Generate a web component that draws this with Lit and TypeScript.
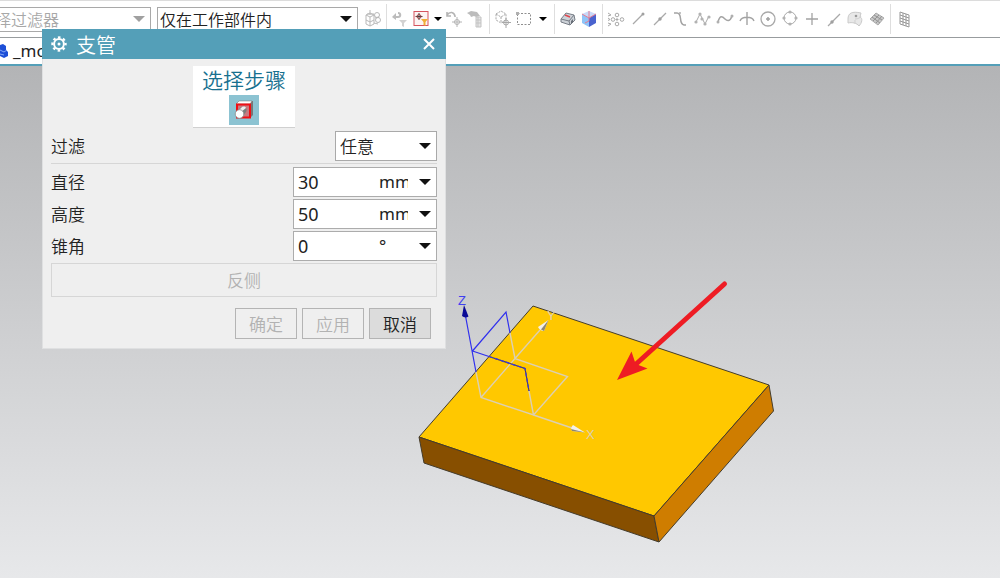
import { LitElement, html, css, svg } from "lit";
import { customElement, property } from "lit/decorators.js";

const glyphs: Record<string, unknown> = {
  assembly: svg`<g fill="none" stroke="#b9b9b9"><path d="M3 6l4-2 4 2v9l-4 2-4-2zM3 6l4 2 4-2M7 8v9M3 11l4 2 4-2M7 1v5M4 5h7"/><circle cx="14" cy="6" r="2.500"/><circle cx="15" cy="11" r="2.500"/><path d="M12 9l4-1M11 14l4 1"/></g>`,
  resetFilter: svg`<path d="M4 8h4c3 0 3-4 0-4" fill="none" stroke="#bcbcbc" stroke-width="2"/><path d="M2 8l4-4v7z" fill="#bcbcbc"/><path d="M9 11h8l-3 3v4l-2-1v-3z" fill="#d2d2d2"/>`,
  snapFilter: svg`<rect x="3" y="2.500" width="14" height="14" fill="#fdf3f3" stroke="#d6545f"/><path d="M8 4v7M4.500 7.500h7" stroke="#4a4040"/><circle cx="8" cy="7.500" r="2" fill="none" stroke="#a04848"/><path d="M10 10h7l-2.500 3v4l-2-1v-3z" fill="#f0ae35"/>`,
  undo: svg`<g fill="none" stroke="#b4b4b4"><path d="M2 3v4h4M2 6c3-4 7-3 8 1v1" stroke-width="1.600"/><path d="M12 8v10M7 13h10"/><circle cx="12" cy="13" r="2.500"/></g>`,
  handList: svg`<path d="M1 4l4-2 6 1 3 4-4 1-2-1-3 1-1-2z" fill="#bcbcbc"/><path d="M10 8h5v10h-5zM10 11h5M10 14h5M12 8v10" fill="#e6e6e6" stroke="#c3c3c3"/>`,
  pickBody: svg`<g fill="none" stroke="#a8a8a8"><path d="M3 5l5-3 5 3v6l-5 3-5-3zM3 5l5 3 5-3M8 8v6" stroke-dasharray="2 1"/><path d="M13 9v10M9 13.500h9"/><circle cx="13" cy="13.500" r="2.500"/></g>`,
  marquee: svg`<rect x="3.500" y="4.500" width="13" height="11" fill="none" stroke="#8f8f8f" stroke-dasharray="2 1.500"/><path d="M2 3h3v3h-3z" fill="#b0b0b0"/>`,
  shade: svg`<path d="M3 10l5-6 8 2 1 5-5 5-9-3z" fill="#cdd2d8" stroke="#777d86"/><path d="M3 10l8 2 5-6M11 12l1 4" fill="none" stroke="#777d86"/><path d="M7 6l5 2" stroke="#e0454c" stroke-width="1.500"/><path d="M13 12l2-2v3l-2 2z" fill="#696f78"/>`,
  cube: svg`<path d="M3 5l7-3 7 3-7 4z" fill="#c9d9f8"/><path d="M3 5l7 4v9l-7-4z" fill="#8fc4f8"/><path d="M17 5l-7 4v9l7-4z" fill="#4a63cf"/><path d="M10 2v10M3 5l7 4 7-4M10 12l-4 2" stroke="#e27a92" fill="none"/>`,
  points: svg`<g fill="none" stroke="#a9a9a9"><circle cx="11" cy="6" r="1.800"/><circle cx="11" cy="15" r="1.800"/><circle cx="7" cy="10.500" r="1.800"/><circle cx="16" cy="10.500" r="1.800"/><path d="M9.500 10.500h3M11 9v3M2 4l3 2-3 1M2 9l2 1.500-2 1M2 17l3-2-3-1"/></g>`,
  endLine: svg`<path d="M5 15L15 5" stroke="#a9a9a9" stroke-width="1.300"/><circle cx="15" cy="5" r="1.500" fill="#a0a0a0"/>`,
  midLine: svg`<path d="M4 16L16 4" stroke="#a9a9a9" stroke-width="1.300"/><circle cx="10" cy="10" r="1.700" fill="#a0a0a0"/>`,
  sCurve: svg`<path d="M3 4h3c6 0 1 11 7 12h2" fill="none" stroke="#a3a3a3" stroke-width="1.500"/><circle cx="9" cy="4" r="1" fill="#b0b0b0"/>`,
  poly: svg`<path d="M3 13L7 5l5 10 4-8" fill="none" stroke="#a9a9a9"/><g fill="#b2b2b2"><circle cx="3" cy="13" r="1.600"/><circle cx="7" cy="5" r="1.600"/><circle cx="12" cy="15" r="1.600"/><circle cx="16" cy="8" r="1.600"/><circle cx="9" cy="10" r="1.600"/></g>`,
  wave: svg`<path d="M3 13c2-8 5-5 7-3s5 3 7-3" fill="none" stroke="#a3a3a3" stroke-width="1.500"/><circle cx="3" cy="13" r="1.500" fill="#b0b0b0"/><circle cx="17" cy="7" r="1.500" fill="#b0b0b0"/>`,
  cross: svg`<path d="M10 3v13M3 12c2-5 12-5 14 0" fill="none" stroke="#a3a3a3" stroke-width="1.400"/>`,
  center: svg`<circle cx="10" cy="10" r="7" fill="none" stroke="#a9a9a9" stroke-width="1.300"/><path d="M10 8v4M8 10h4" stroke="#a0a0a0" stroke-width="1.500"/>`,
  quadrant: svg`<circle cx="10" cy="9" r="6" fill="none" stroke="#a9a9a9"/><g fill="#b2b2b2"><circle cx="10" cy="3" r="1.600"/><circle cx="10" cy="15" r="1.600"/><circle cx="4" cy="9" r="1.600"/><circle cx="16" cy="9" r="1.600"/></g>`,
  plus: svg`<path d="M10 4v12M4 10h12" stroke="#a3a3a3" stroke-width="1.300"/>`,
  onCurve: svg`<path d="M4 17L16 5" stroke="#a9a9a9" stroke-width="1.300"/><circle cx="8" cy="13" r="1.700" fill="#a0a0a0"/>`,
  face: svg`<path d="M3 10c0-6 4-8 13-6l-1 4c3 1 2 6-1 9-2-3-7-4-11-3z" fill="#e8e8e8" stroke="#cacaca"/><path d="M10 10c3 0 5-1 6-3M10 11v4" stroke="#cfcfcf" fill="none"/><circle cx="11" cy="7" r="1.300" fill="#9a9a9a"/>`,
  facet: svg`<path d="M3 10l6-6 8 5-6 7z" fill="#c8c8c8" stroke="#ababab"/><path d="M5 8l8 6M7 6l8 5M6 12l6-6M9 14l6-7" stroke="#949494"/>`,
  grid: svg`<path d="M6 3l9 3v12l-9-3zM9 4v12M12 5v12M6 6l9 3M6 9l9 3M6 12l9 3" fill="none" stroke="#999"/>`,
};

@customElement("tool-icon")
class ToolIcon extends LitElement {
  @property() name = "";
  static styles = css`
    :host { display: block; }
    button { display: block; width: 20px; height: 20px; padding: 0; border: 0; background: none; }
    svg { display: block; width: 20px; height: 20px; }
  `;
  render() {
    return html`<button type="button" aria-label=${this.name}><svg viewBox="0 0 20 20">${glyphs[this.name]}</svg></button>`;
  }
}

const icons = (names: string[]) => names.map((n) => html`<tool-icon name=${n}></tool-icon>`);
const caret = html`<svg class="caret" viewBox="0 0 12 6" aria-hidden="true"><path d="M0 0h12L6 6z" fill="currentColor" /></svg>`;
const smallCaret = (cls: string) => html`<button type="button" class="more ${cls}" aria-label="更多">
  <svg viewBox="0 0 8 4"><path d="M0 0h8L4 4z" fill="#000" /></svg>
</button>`;

@customElement("app-root")
class AppRoot extends LitElement {
  static styles = css`
    :host {
      display: flex;
      flex-direction: column;
      position: relative;
      min-height: 100vh;
      overflow: hidden;
      background: #fff;
      color: #222;
      font: 17px/24px "Noto Sans", "Noto Sans CJK SC", sans-serif;
    }
    * { box-sizing: border-box; }
    button, select, input { font: inherit; color: inherit; margin: 0; }
    button, select, h1, h2, label { font-family: "Noto Sans CJK SC", sans-serif; font-weight: 350; }

    .toolbar {
      display: flex;
      align-items: center;
      height: 38px;
      border-top: 1px solid #dcdcdc;
      border-bottom: 1px solid #989c9e;
      overflow: hidden;
    }
    .combo { display: grid; align-items: center; flex: none; color: #111; }
    .combo > select, .combo > .caret { grid-area: 1 / 1; }
    .combo > .caret { justify-self: end; pointer-events: none; }
    select { appearance: none; border: 1px solid #a9a9a9; border-radius: 0; background: #fff; outline: 0; opacity: 1; }
    .caret { width: 12px; height: 6px; margin-right: 6px; }
    .bar select { height: 25px; font-size: 16px; line-height: 22px; padding: 0 20px 0 2px; width: 100%; color: #222; }
    .bar.type { width: 191px; margin-left: -40px; margin-right: 6px; color: #a0a0a0; }
    .bar.type select { color: #a8a8a8; }
    .bar.scope { width: 201px; margin-right: 2px; }
    .group { display: flex; align-items: center; justify-content: space-between; gap: 1px; flex: none; padding: 0 3px; border-right: 1px solid #dedede; height: 30px; }
    .group.wide { width: 288px; }
    .group.last { border: 0; }
    .more { display: flex; align-items: center; justify-content: center; width: 12px; height: 20px; padding: 0; border: 0; background: none; }
    .more.roomy { width: 16px; }
    .more svg { width: 8px; height: 4px; }

    .tabs { display: flex; align-items: center; gap: 5px; height: 28px; border-bottom: 2px solid #549fb8; }
    .tabs svg { width: 8px; height: 16px; }
    .tabs a { color: #222; text-decoration: none; }

    .view { flex: 1; min-height: 0; background: linear-gradient(#b3b4b6, #e7e8ea); display: flex; }
    .view svg { display: block; width: 100%; height: auto; }
    .axis { font: 13px "Liberation Sans", sans-serif; }

    .dialog {
      position: absolute;
      top: 29px;
      left: 42px;
      width: 404px;
      background: #efefef;
      border: 1px solid #dfe0e1;
      border-top: 0;
    }
    .title { display: flex; align-items: center; gap: 9px; height: 30px; padding: 0 9px; margin: 0 -1px; background: #549fb8; color: #fff; }
    .title h1 { flex: 1; margin: 0; padding-top: 2px; font-size: 20px; line-height: 30px; }
    .title svg { display: block; width: 16px; height: 16px; }
    .title button { padding: 0; border: 0; background: none; }
    .body { display: flex; flex-direction: column; padding: 7px 8px 9px; }
    .step { align-self: center; width: 102px; height: 62px; background: #fff; border-bottom: 1px solid #d0d0d0; display: flex; flex-direction: column; align-items: center; }
    .step h2 { margin: 0; height: 29px; font-size: 21px; line-height: 26px; color: #17708f; }
    .step button { width: 30px; height: 30px; padding: 0; border: 0; background: #8cc3d2; }
    .step svg { display: block; width: 30px; height: 30px; }
    .row { display: flex; justify-content: space-between; align-items: center; height: 30px; margin-top: 2px; }
    .row.filter { height: 33px; margin-top: 3px; padding-bottom: 3px; border-bottom: 1px solid #d6d6d6; margin-bottom: 1px; }
    .row .combo { width: 102px; }
    .row select { width: 100%; height: 30px; padding: 0 20px 0 4px; line-height: 26px; color: #222; }
    .field { display: flex; width: 144px; height: 30px; background: #fff; border: 1px solid #acacac; }
    .field input { flex: 1; min-width: 0; padding: 0 0 0 4px; border: 0; background: none; outline: 0; font-size: 18px; line-height: 26px; }
    .field .combo { width: 57px; }
    .field .caret { margin-right: 5px; }
    .field select { height: 28px; border: 0; padding: 0 28px 0 0; font-family: "Noto Sans", sans-serif; font-weight: 400; }
    .push { border: 1px solid #b4b4b4; background: #efefef; padding: 0; color: #b2b2b2; line-height: 24px; }
    .push.flip { height: 34px; margin-top: 2px; border-color: #d6d6d6; }
    .actions { display: flex; justify-content: flex-end; gap: 5px; margin-top: 11px; padding-right: 6px; }
    .actions .push { width: 62px; height: 31px; }
    .actions .cancel { background: #dcdcdc; color: #222; }
  `;

  private combo(cls: string, label: string, options: string[], disabled = false) {
    return html`<span class="combo ${cls}">
      <select aria-label=${label} ?disabled=${disabled}>${options.map((o) => html`<option>${o}</option>`)}</select>${caret}
    </span>`;
  }

  private measure(id: string, label: string, value: string, unit: string) {
    return html`<div class="row">
      <label for=${id}>${label}</label>
      <div class="field">
        <input id=${id} .value=${value} inputmode="decimal" />
        ${this.combo("unit", `${label}单位`, [unit])}
      </div>
    </div>`;
  }

  private scene() {
    return html`<svg viewBox="0 66 1000 512" role="img" aria-label="模型">
      <g stroke="#443c2c" stroke-width="1" stroke-linejoin="round">
        <path d="M533 306L769 385L654 516L419 437Z" fill="#ffc800" />
        <path d="M419 437L654 516L659 542L424 463Z" fill="#874f00" />
        <path d="M769 385L773.500 411L659 542L654 516Z" fill="#cf7d00" />
      </g>
      <g fill="none" stroke="#dccfb2" stroke-width="1.400">
        <path d="M476 372L481 397.500L533.500 415L567.500 376.500L515 358.500L481 397.500" />
        <path d="M515 358.500L540 330M533.500 415L572 428M515 358.500L510 333M533.500 415L529 391" />
      </g>
      <g fill="none" stroke="#2f2fee" stroke-width="1.200">
        <path d="M465.500 316L476 372M472.500 351L506 312L510 333" />
        <path d="M472.500 351L489 356.500" />
        <path d="M489 356.500L525 368.500L529 391" stroke="#4b3f58" />
        <path d="M489 356.500L525 368.500L529 391" stroke="#3b36e0" stroke-dasharray="4 2" />
      </g>
      <path d="M464 305L468.500 316.500Q465 318.500 462 316Z" fill="#0a0a96" />
      <path d="M548.500 320L544 331Q540 331 538 327Z" fill="#f3f0e8" />
      <path d="M548.500 320L544 331L541 329.500Z" fill="#8e8672" />
      <path d="M585 432.500L573 425Q570 428 572 431Z" fill="#f3f0e8" />
      <path d="M585 432.500L571 429L572 431Z" fill="#8e8672" />
      <text class="axis" x="458" y="305" fill="#4040f0">Z</text>
      <text class="axis" x="547" y="320" fill="#dccfb2">Y</text>
      <text class="axis" x="586" y="439" fill="#dccfb2">X</text>
      <path d="M724.500 284L635 365" stroke="#ee1c24" stroke-width="5" stroke-linecap="round" />
      <path d="M617 380L631.500 351.500L635 362L638.500 365L647.500 368.500Z" fill="#ee1c24" />
    </svg>`;
  }

  render() {
    return html`
      <header class="toolbar">
        ${this.combo("bar type", "类型过滤器", ["无选择过滤器"], true)}
        ${this.combo("bar scope", "选择范围", ["仅在工作部件内"])}
        <div class="group">${icons(["assembly"])}</div>
        <div class="group">${icons(["resetFilter", "snapFilter"])}${smallCaret("")}${icons(["undo", "handList"])}</div>
        <div class="group">${icons(["pickBody", "marquee"])}${smallCaret("roomy")}</div>
        <div class="group">${icons(["shade", "cube"])}</div>
        <div class="group wide">
          ${icons(["points", "endLine", "midLine", "sCurve", "poly", "wave", "cross", "center", "quadrant", "plus", "onCurve", "face", "facet"])}
        </div>
        <div class="group last">${icons(["grid"])}</div>
      </header>
      <nav class="tabs">
        <svg viewBox="0 0 8 16" aria-hidden="true">
          <path d="M0 2l3-1 3 2v4l2 2v4l-4 2-4-2z" fill="#1d4fd7" /><path d="M0 7l4 2 3-2M0 11l4 1" stroke="#86a8f5" fill="none" />
        </svg>
        <a href="#model">_model</a>
      </nav>
      <main class="view">${this.scene()}</main>

      <form class="dialog" role="dialog" aria-labelledby="title" @submit=${(e: Event) => e.preventDefault()}>
        <div class="title">
          <svg viewBox="0 0 16 16" fill="none" stroke="#fff">
            <circle cx="8" cy="8" r="4.900" stroke-width="2" />
            <circle cx="8" cy="8" r="6.600" stroke-width="2.200" stroke-dasharray="2.600 2.584" stroke-dashoffset="1.300" />
            <circle cx="8" cy="8" r="1.500" fill="#fff" stroke="none" />
          </svg>
          <h1 id="title">支管</h1>
          <button type="button" aria-label="关闭">
            <svg viewBox="0 0 16 16"><path d="M3 3l10 10M13 3L3 13" stroke="#fff" stroke-width="2" /></svg>
          </button>
        </div>
        <div class="body">
          <section class="step">
            <h2>选择步骤</h2>
            <button type="button" aria-label="放置面">
              <svg viewBox="0 0 30 30">
                <path d="M7 9l3-3h14v14l-3 3z" fill="#777" />
                <path d="M7 9l3-3h13l-2 3z" fill="#fff" stroke="#777" stroke-width=".5" />
                <rect x="8" y="9.500" width="13" height="13" fill="#c9797f" stroke="#f00e14" stroke-width="2" />
                <path d="M8 17l4-5c4-2 7 2 5 5l-4 5z" fill="#7c7c7c" />
                <path d="M9 16l4-4c2-1 4 0 4 1l-5 4z" fill="#eee" />
                <circle cx="10.500" cy="19" r="4.300" fill="#fff" stroke="#888" stroke-width=".8" />
              </svg>
            </button>
          </section>
          <div class="row filter">
            <label for="filter">过滤</label>
            <span class="combo"><select id="filter"><option>任意</option></select>${caret}</span>
          </div>
          ${this.measure("diameter", "直径", "30", "mm")}
          ${this.measure("height", "高度", "50", "mm")}
          ${this.measure("taper", "锥角", "0", "°")}
          <button type="button" class="push flip" disabled>反侧</button>
          <div class="actions">
            <button type="submit" class="push" disabled>确定</button>
            <button type="button" class="push" disabled>应用</button>
            <button type="button" class="push cancel">取消</button>
          </div>
        </div>
      </form>
    `;
  }
}
